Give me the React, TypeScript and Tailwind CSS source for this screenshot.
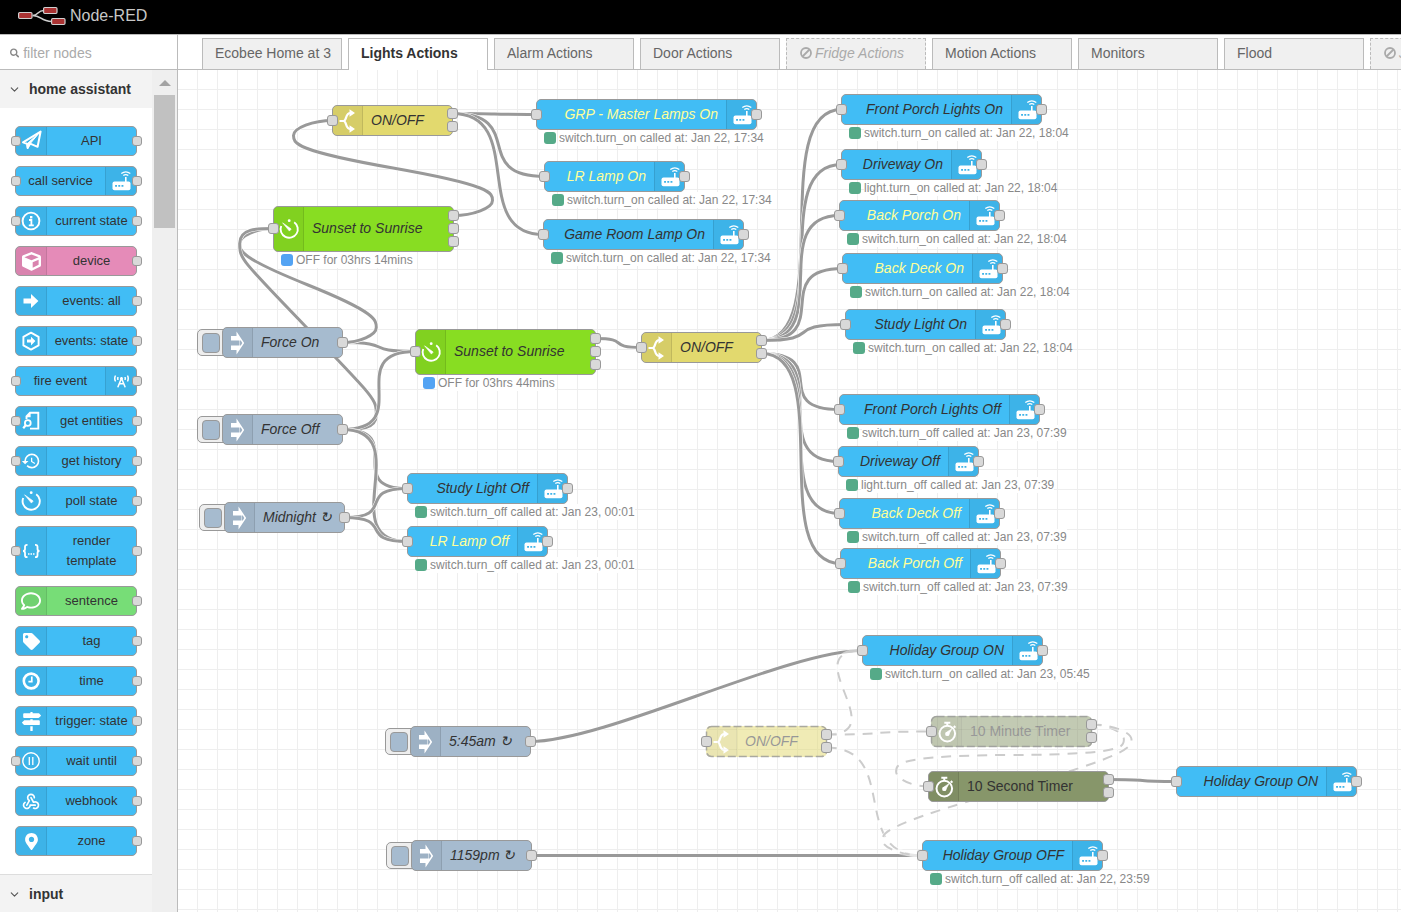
import React from "react";
import {
  FaBroadcastTower,
  FaCube,
  FaMapMarkerAlt,
  FaMapSigns,
  FaRegComment,
  FaSearch,
  FaTag,
} from "react-icons/fa";
import { MdHistory } from "react-icons/md";
import { TbWebhook } from "react-icons/tb";
import { ChevronDown } from "lucide-react";

/* ---------- icons ---------- */

function Glyph({ children }: { children: React.ReactNode }) {
  return (
    <svg viewBox="1 1 28 28" className="size-7 shrink-0" fill="none" stroke="#fff" strokeWidth="2" aria-hidden="true">
      {children}
    </svg>
  );
}

const RouterIcon = () => (
  <Glyph>
    <rect x="6.5" y="15.6" width="18" height="8.6" rx="2" fill="#fff" stroke="none" />
    <path d="M19.8 16v-5" strokeWidth="1.6" />
    <path d="M17.3 9.6q2.5-1.9 5 0M15.300 7.500q4.500-3.300 9 0" strokeWidth="1.3" />
    <path d="M9.1 19.900h1.900M12.300 19.900h1.900M15.500 19.900h1.900" stroke="#3eb3e8" strokeWidth="1.900" />
  </Glyph>
);

const PlaneIcon = () => (
  <Glyph>
    <path d="M7 16.4 24.6 5.6 21.6 20.8 14.2 17.6 11.6 21.8 11 17.8Z" strokeWidth="2" strokeLinejoin="round" />
    <path d="M11 18 24 6 14 17.8 11.6 23Z" fill="#fff" strokeWidth="1" strokeLinejoin="round" />
  </Glyph>
);

const InfoIcon = () => (
  <Glyph>
    <circle cx="15" cy="15" r="8.4" strokeWidth="1.9" />
    <path d="M15.2 10v2.4" strokeWidth="2.4" />
    <path d="M13 14h2.4v5.2M12.8 19.4h5" strokeWidth="1.8" />
  </Glyph>
);

const ArrowIcon = () => (
  <Glyph>
    <path d="M7.5 12.4H15V8L22.4 15 15 22v-4.4H7.5Z" fill="#fff" stroke="none" />
  </Glyph>
);

const HexArrowIcon = () => (
  <Glyph>
    <path d="M15 6.6 22.6 10.8v8.600L15 23.600 7.400 19.400V10.800Z" strokeWidth="1.900" strokeLinejoin="round" />
    <path d="M11 13.600h4V10.700l4.400 4.400-4.400 4.400v-2.900h-4Z" fill="#fff" stroke="none" />
  </Glyph>
);

const EntitiesIcon = () => (
  <Glyph>
    <path d="M10.500 13V10.400L14 6.800h8.300V22.600H14" strokeWidth="1.900" />
    <path d="M10 11.200 14.600 6.400V11.200Z" fill="#fff" stroke="none" />
    <circle cx="11.800" cy="17" r="2.900" strokeWidth="1.800" />
    <path d="M9.700 19.200 7.200 22.200" strokeWidth="2.200" />
  </Glyph>
);

const TimerIcon = () => (
  <Glyph>
    <path d="M20.200 8.200A8.600 8.600 0 1 1 7.200 12" strokeWidth="1.900" />
    <circle cx="15.200" cy="6.700" r="1.400" fill="#fff" stroke="none" />
    <path d="M8.600 8.800 17.200 15 15.400 17.100Z" fill="#fff" strokeWidth=".6" strokeLinejoin="round" />
  </Glyph>
);

const ClockIcon = () => (
  <Glyph>
    <circle cx="15.200" cy="15" r="7.400" strokeWidth="2.600" />
    <path d="M15.800 10.600v5H12.400" strokeWidth="1.700" />
  </Glyph>
);

const BracesIcon = () => (
  <Glyph>
    <path
      d="M11.500 8.800H11q-2 0-2 2v2.200q0 2-2 2 2 0 2 2v2.200q0 2 2 2h.5M19 8.800h.5q2 0 2 2v2.200q0 2 2 2-2 0-2 2v2.200q0 2-2 2H19"
      strokeWidth="1.800"
    />
    <path d="M12 18h1.500M14.500 18h1.500M17 18h1.500" strokeWidth="1.400" />
  </Glyph>
);

const PauseIcon = () => (
  <Glyph>
    <circle cx="15" cy="15" r="8.200" strokeWidth="1.400" />
    <path d="M13.300 11v8M16.800 11v8" strokeWidth="1.300" />
  </Glyph>
);

const SwitchIcon = () => (
  <Glyph>
    <path d="M6.500 15h4C14 15 12 7 17.500 7M10.500 15C14 15 12 23 17.500 23" strokeWidth="2.200" />
    <path d="M16.500 3.200 22 7 16.500 10.800ZM16.500 19.200 22 23 16.500 26.800Z" fill="#fff" stroke="none" />
  </Glyph>
);

const InjectIcon = () => (
  <Glyph>
    <path
      fillRule="evenodd"
      d="M13.500 3.500 21.200 15 13.500 26.500V22H8v-4.500h9V12.500H8V8h5.500ZM16.500 12.500v5h1.300L19.300 15 17.800 12.500Z"
      fill="#fff"
      stroke="none"
    />
  </Glyph>
);

const StopwatchIcon = () => (
  <Glyph>
    <circle cx="15.300" cy="16.600" r="7.800" strokeWidth="2" />
    <path d="M12.300 5.800h6M15.300 6v3M21.800 9 23.400 10.600" strokeWidth="2" />
    <path d="M14.200 15.600 20.200 11.400 16.600 17.800Z" fill="#fff" strokeWidth=".6" />
    <circle cx="15.300" cy="16.900" r="2.200" fill="#fff" stroke="none" />
  </Glyph>
);

const BanIcon = () => (
  <svg viewBox="0 0 14 14" className="size-[14px] shrink-0" fill="none" stroke="currentColor" strokeWidth="1.800" aria-hidden="true">
    <circle cx="7" cy="7" r="5" />
    <path d="M3.500 10.500 10.500 3.500" />
  </svg>
);

/* ---------- palette ---------- */

type PaletteItem = {
  label: string;
  icon: React.ReactNode;
  input?: boolean;
  iconRight?: boolean;
  color?: string;
};

const paletteItems: PaletteItem[] = [
  { label: "API", icon: <PlaneIcon />, input: true },
  { label: "call service", icon: <RouterIcon />, input: true, iconRight: true },
  { label: "current state", icon: <InfoIcon />, input: true },
  { label: "device", icon: <FaCube size={19} />, color: "bg-[#e58bb8]" },
  { label: "events: all", icon: <ArrowIcon /> },
  { label: "events: state", icon: <HexArrowIcon /> },
  { label: "fire event", icon: <FaBroadcastTower size={15} />, input: true, iconRight: true },
  { label: "get entities", icon: <EntitiesIcon />, input: true },
  { label: "get history", icon: <MdHistory size={20} />, input: true },
  { label: "poll state", icon: <TimerIcon /> },
  { label: "render template", icon: <BracesIcon />, input: true },
  { label: "sentence", icon: <FaRegComment size={20} />, color: "bg-[#77dd77]" },
  { label: "tag", icon: <FaTag size={17} /> },
  { label: "time", icon: <ClockIcon /> },
  { label: "trigger: state", icon: <FaMapSigns size={19} /> },
  { label: "wait until", icon: <PauseIcon />, input: true },
  { label: "webhook", icon: <TbWebhook size={20} /> },
  { label: "zone", icon: <FaMapMarkerAlt size={17} /> },
];

const portLook = "absolute box-border rounded-[3px] border border-[#999] bg-[#d9d9d9]";

function PaletteNode({ item }: { item: PaletteItem }) {
  return (
    <li
      className={`relative flex min-h-[30px] rounded-[5px] border border-[#999] ${item.color ?? "bg-[#41bdf5]"} ${item.iconRight ? "flex-row-reverse" : ""}`}
    >
      <span
        className={`flex w-[31px] shrink-0 items-center justify-center bg-black/5 text-white ${item.iconRight ? "rounded-r-[4px] border-l border-black/10" : "rounded-l-[4px] border-r border-black/10"}`}
      >
        {item.icon}
      </span>
      <span className={`flex-1 py-1 text-center text-[13px] leading-5 text-[#333] ${item.iconRight ? "" : "px-[6px]"}`}>
        {item.label}
      </span>
      {item.input && <i className={`${portLook} top-1/2 -left-[5px] size-[10px] -translate-y-1/2`} />}
      <i className={`${portLook} top-1/2 -right-[6px] size-[10px] -translate-y-1/2`} />
    </li>
  );
}

function CategoryHeader({ name }: { name: string }) {
  return (
    <button type="button" className="flex h-[38px] w-full items-center gap-2 bg-[#f3f3f3] pl-2 text-left text-sm font-bold text-[#333]">
      <ChevronDown size={13} strokeWidth={2} className="text-[#555]" />
      {name}
    </button>
  );
}

function Palette() {
  return (
    <aside className="flex w-[178px] shrink-0 flex-col border-r border-[#bbb] bg-white">
      <label className="flex h-[35px] shrink-0 items-center gap-1 border-b border-[#bbb] pt-0.5 pl-[10px]">
        <FaSearch size={10} className="text-[#888]" />
        <input
          type="text"
          aria-label="filter nodes"
          placeholder="filter nodes"
          className="w-full min-w-0 text-sm outline-none placeholder:text-[#aaa]"
        />
      </label>
      <div className="flex min-h-0 flex-1">
        <div className="min-w-0 flex-1 overflow-hidden">
          <CategoryHeader name="home assistant" />
          <ul className="flex flex-col gap-[10px] py-[18px] pr-[15px] pl-[15px]">
            {paletteItems.map((item) => (
              <PaletteNode key={item.label} item={item} />
            ))}
          </ul>
          <div className="border-t border-[#ddd]">
            <CategoryHeader name="input" />
          </div>
        </div>
        <div className="flex w-[25px] flex-col items-center gap-[9px] bg-[#efefef] pt-[10px]">
          <i className="size-0 border-x-[6px] border-b-[6px] border-x-transparent border-b-[#a3a3a3]" />
          <i className="h-[133px] w-[21px] bg-[#c1c1c1]" />
        </div>
      </div>
    </aside>
  );
}

/* ---------- flow ---------- */

type Kind = "service" | "switch" | "timer" | "inject" | "stopwatch";

type FlowNode = {
  id: string;
  kind: Kind;
  x: number;
  y: number;
  w: number;
  label: string;
  status?: string;
  tone?: "yellow";
  disabled?: boolean;
};

const nodes: FlowNode[] = [
  { id: "sw1", kind: "switch", x: 154, y: 35, w: 120, label: "ON/OFF" },
  { id: "sun1", kind: "timer", x: 95, y: 136, w: 180, label: "Sunset to Sunrise", status: "OFF for 03hrs 14mins" },
  { id: "fon", kind: "inject", x: 44, y: 257, w: 120, label: "Force On" },
  { id: "foff", kind: "inject", x: 44, y: 344, w: 120, label: "Force Off" },
  { id: "mid", kind: "inject", x: 46, y: 432, w: 120, label: "Midnight ↻" },
  { id: "sun2", kind: "timer", x: 237, y: 259, w: 180, label: "Sunset to Sunrise", status: "OFF for 03hrs 44mins" },
  { id: "sw2", kind: "switch", x: 463, y: 262, w: 120, label: "ON/OFF" },
  { id: "grp", kind: "service", x: 358, y: 29, w: 220, label: "GRP - Master Lamps On", tone: "yellow", status: "switch.turn_on called at: Jan 22, 17:34" },
  { id: "lron", kind: "service", x: 366, y: 91, w: 140, label: "LR Lamp On", tone: "yellow", status: "switch.turn_on called at: Jan 22, 17:34" },
  { id: "game", kind: "service", x: 365, y: 149, w: 200, label: "Game Room Lamp On", status: "switch.turn_on called at: Jan 22, 17:34" },
  { id: "fpon", kind: "service", x: 663, y: 24, w: 200, label: "Front Porch Lights On", status: "switch.turn_on called at: Jan 22, 18:04" },
  { id: "dwon", kind: "service", x: 663, y: 79, w: 140, label: "Driveway On", status: "light.turn_on called at: Jan 22, 18:04" },
  { id: "bpon", kind: "service", x: 661, y: 130, w: 160, label: "Back Porch On", tone: "yellow", status: "switch.turn_on called at: Jan 22, 18:04" },
  { id: "bdon", kind: "service", x: 664, y: 183, w: 160, label: "Back Deck On", tone: "yellow", status: "switch.turn_on called at: Jan 22, 18:04" },
  { id: "slon", kind: "service", x: 667, y: 239, w: 160, label: "Study Light On", status: "switch.turn_on called at: Jan 22, 18:04" },
  { id: "fpoff", kind: "service", x: 661, y: 324, w: 200, label: "Front Porch Lights Off", status: "switch.turn_off called at: Jan 23, 07:39" },
  { id: "dwoff", kind: "service", x: 660, y: 376, w: 140, label: "Driveway Off", status: "light.turn_off called at: Jan 23, 07:39" },
  { id: "bdoff", kind: "service", x: 661, y: 428, w: 160, label: "Back Deck Off", tone: "yellow", status: "switch.turn_off called at: Jan 23, 07:39" },
  { id: "bpoff", kind: "service", x: 662, y: 478, w: 160, label: "Back Porch Off", tone: "yellow", status: "switch.turn_off called at: Jan 23, 07:39" },
  { id: "sloff", kind: "service", x: 229, y: 403, w: 160, label: "Study Light Off", status: "switch.turn_off called at: Jan 23, 00:01" },
  { id: "lroff", kind: "service", x: 229, y: 456, w: 140, label: "LR Lamp Off", tone: "yellow", status: "switch.turn_off called at: Jan 23, 00:01" },
  { id: "hon", kind: "service", x: 684, y: 565, w: 180, label: "Holiday Group ON", status: "switch.turn_on called at: Jan 23, 05:45" },
  { id: "am", kind: "inject", x: 232, y: 656, w: 120, label: "5:45am ↻" },
  { id: "pm", kind: "inject", x: 233, y: 770, w: 120, label: "1159pm ↻" },
  { id: "sw3", kind: "switch", x: 528, y: 656, w: 120, label: "ON/OFF", disabled: true },
  { id: "t10m", kind: "stopwatch", x: 753, y: 646, w: 160, label: "10 Minute Timer", disabled: true },
  { id: "t10s", kind: "stopwatch", x: 750, y: 701, w: 180, label: "10 Second Timer" },
  { id: "hon2", kind: "service", x: 998, y: 696, w: 180, label: "Holiday Group ON" },
  { id: "hoff", kind: "service", x: 744, y: 770, w: 180, label: "Holiday Group OFF", status: "switch.turn_off called at: Jan 22, 23:59" },
];

const kinds: Record<Kind, { fill: string; icon: React.ReactNode; outputs: number; height: number }> = {
  service: { fill: "bg-[#41bdf5]", icon: <RouterIcon />, outputs: 1, height: 30 },
  switch: { fill: "bg-[#e2d96e]", icon: <SwitchIcon />, outputs: 2, height: 30 },
  timer: { fill: "bg-[#88dd22]", icon: <TimerIcon />, outputs: 3, height: 45 },
  inject: { fill: "bg-[#a6bbcf]", icon: <InjectIcon />, outputs: 1, height: 30 },
  stopwatch: { fill: "bg-[#87966a]", icon: <StopwatchIcon />, outputs: 2, height: 30 },
};

type Link = [from: string, port: number, to: string, disabled?: boolean];

const links: Link[] = [
  ["sw1", 0, "grp"],
  ["sw1", 0, "lron"],
  ["sw1", 0, "game"],
  ["sun1", 0, "sw1"],
  ["fon", 0, "sun2"],
  ["fon", 0, "sun1"],
  ["foff", 0, "sun1"],
  ["foff", 0, "sun2"],
  ["foff", 0, "sloff"],
  ["foff", 0, "lroff"],
  ["mid", 0, "sloff"],
  ["mid", 0, "lroff"],
  ["sun2", 0, "sw2"],
  ["sw2", 0, "fpon"],
  ["sw2", 0, "dwon"],
  ["sw2", 0, "bpon"],
  ["sw2", 0, "bdon"],
  ["sw2", 0, "slon"],
  ["sw2", 1, "fpoff"],
  ["sw2", 1, "dwoff"],
  ["sw2", 1, "bdoff"],
  ["sw2", 1, "bpoff"],
  ["am", 0, "hon"],
  ["pm", 0, "hoff"],
  ["t10s", 0, "hon2"],
  ["sw3", 0, "hon", true],
  ["sw3", 0, "t10m", true],
  ["sw3", 1, "hoff", true],
  ["t10m", 0, "t10s", true],
  ["t10m", 0, "hoff", true],
];

function outputTop(kind: Kind, port: number) {
  const { outputs, height } = kinds[kind];
  return Math.floor((height + 1 - (outputs * 13 - 2)) / 2) + port * 13;
}

const REACH = 100;

function linkPath(ox: number, oy: number, tx: number, ty: number) {
  const dx = tx - ox;
  const dy = ty - oy;
  const delta = Math.hypot(dx, dy);
  if (dx > 0) {
    const scale = delta < REACH ? 0.75 * (delta / REACH) : 0.75;
    return `M${ox} ${oy}C${ox + REACH * scale} ${oy} ${tx - REACH * scale} ${ty} ${tx} ${ty}`;
  }
  const scale = 0.4 - 0.2 * Math.max(0, (REACH - Math.min(Math.abs(dx), Math.abs(dy))) / REACH);
  const midX = Math.floor(tx - dx / 2);
  const midY = dy === 0 ? ty + 30 : Math.floor(ty - dy / 2);
  const ch = 15;
  const s = dy > 0 ? 1 : -1;
  const near = dy > 0 ? Math.min : Math.max;
  const far = dy > 0 ? Math.max : Math.min;
  const y1 = (ty + midY) / 2;
  const topX = ox + REACH * scale;
  const topY = near(y1 - dy / 2, oy + s * ch);
  const botX = tx - REACH * scale;
  const botY = far(y1, ty - s * ch);
  const x1 = (ox + topX) / 2;
  const cp = [
    [x1, oy],
    [topX, far(oy, topY - s * ch)],
    [x1, near(midY, topY + s * ch)],
    [botX, far(midY, botY - s * ch)],
    [(tx + botX) / 2, ty],
  ];
  if (cp[2][1] === topY + s * ch) {
    if (Math.abs(dy) < ch * 10) {
      cp[1][1] = topY - (s * ch) / 2;
      cp[3][1] = botY - (s * ch) / 2;
    }
    cp[2][0] = topX;
  }
  return `M${ox} ${oy}C${cp[0]} ${cp[1]} ${topX} ${topY}S${cp[2]} ${midX} ${midY}S${cp[3]} ${botX} ${botY}S${cp[4]} ${tx} ${ty}`;
}

function Wires() {
  const byId = new Map(nodes.map((n) => [n.id, n]));
  return (
    <svg className="absolute inset-0 h-full w-full" fill="none" aria-hidden="true">
      {links.map(([from, port, to, disabled]) => {
        const a = byId.get(from)!;
        const b = byId.get(to)!;
        const d = linkPath(
          a.x + a.w + 0.5,
          a.y + outputTop(a.kind, port) + 5.5,
          b.x + 0.5,
          b.y + Math.floor(kinds[b.kind].height / 2) + 0.5
        );
        return (
          <g key={`${from}-${port}-${to}`}>
            <path d={d} stroke="#fff" strokeWidth="4" strokeOpacity={disabled ? 0.5 : 1} />
            {disabled ? (
              <path d={d} stroke="#ccc" strokeWidth="2" strokeDasharray="10 8" />
            ) : (
              <path d={d} stroke="#999" strokeWidth="3" />
            )}
          </g>
        );
      })}
    </svg>
  );
}

function CanvasNode({ node }: { node: FlowNode }) {
  const { fill, icon, outputs, height } = kinds[node.kind];
  const right = node.kind === "service";
  const italic = node.kind !== "stopwatch";
  return (
    <div className="absolute" style={{ left: node.x, top: node.y, width: node.w + 1 }}>
      {node.kind === "inject" && (
        <button
          type="button"
          aria-label={`Inject ${node.label}`}
          className="absolute top-[2px] -left-[25px] flex h-[27px] w-8 items-center rounded-[5px] border border-[#999] bg-[#eee] pl-1"
        >
          <i className="h-5 w-[18px] rounded-[4px] border border-[#999] bg-[#a6bbcf]" />
        </button>
      )}
      <div
        className={`relative flex overflow-hidden rounded-[5px] border ${fill} ${right ? "flex-row-reverse" : ""} ${node.disabled ? "border-transparent opacity-50" : "border-[#999]"}`}
        style={{ height: height + 1 }}
      >
        <span
          className={`flex w-[30px] shrink-0 items-center justify-center bg-black/5 ${right ? "border-l border-black/10" : "border-r border-black/10"}`}
        >
          {icon}
        </span>
        <span
          className={`flex flex-1 items-center px-2 pb-0.5 text-sm whitespace-nowrap ${italic ? "italic" : ""} ${right ? "justify-end" : ""} ${node.tone ? "text-[#ffff99]" : "text-[#333]"}`}
        >
          {node.label}
        </span>
      </div>
      {node.disabled && (
        <svg className="absolute inset-0 h-full w-full overflow-visible" fill="none" aria-hidden="true">
          <rect x=".5" y=".5" width={node.w} height={height} rx="5" stroke="#999" strokeWidth="1.500" strokeOpacity=".8" strokeDasharray="8 3" />
        </svg>
      )}
      {node.kind !== "inject" && (
        <i className={`${portLook} -left-[5px] size-[11px]`} style={{ top: Math.floor((height - 10) / 2) }} />
      )}
      {Array.from({ length: outputs }, (_, i) => (
        <i key={i} className={`${portLook} -right-[5px] size-[11px]`} style={{ top: outputTop(node.kind, i) }} />
      ))}
      {node.status && (
        <div className="absolute top-full left-2 flex items-center gap-[3px] text-xs leading-4 whitespace-nowrap text-[#888]">
          <i className={`size-3 rounded-[3px] ${node.kind === "timer" ? "bg-[#53a3f3]" : "bg-[#55aa88]"}`} />
          <span className="bg-white">{node.status}</span>
        </div>
      )}
    </div>
  );
}

const tabs = [
  { name: "Ecobee Home at 3" },
  { name: "Lights Actions", active: true },
  { name: "Alarm Actions" },
  { name: "Door Actions" },
  { name: "Fridge Actions", disabled: true },
  { name: "Motion Actions" },
  { name: "Monitors" },
  { name: "Flood" },
  { name: "Jobs", disabled: true },
];

function Tabs() {
  return (
    <div role="tablist" className="flex h-[35px] shrink-0 items-end gap-[6px] border-b border-[#bbb] pl-6">
      {tabs.map((tab) => (
        <button
          key={tab.name}
          type="button"
          role="tab"
          aria-selected={!!tab.active}
          className={`flex w-[140px] shrink-0 items-center gap-0.5 overflow-hidden border border-b-0 border-[#bbb] pl-3 text-sm whitespace-nowrap ${
            tab.active
              ? "-mb-px h-8 bg-white pb-[3px] font-bold text-[#333]"
              : tab.disabled
                ? "h-[31px] border-dashed bg-[#f0f0f0] pb-0.5 text-[#aaa] italic"
                : "h-[31px] bg-[#f0f0f0] pb-0.5 text-[#666]"
          }`}
        >
          {tab.disabled && <BanIcon />}
          {tab.name}
        </button>
      ))}
    </div>
  );
}

function Logo() {
  return (
    <svg viewBox="0 0 48 20" className="h-5 w-12" fill="#aa3333" stroke="#d0d0d0" strokeWidth="1.200" aria-hidden="true">
      <path d="M14.500 9.500C21 9.500 19 4.500 26 4.500M14.500 9.500C24 9.500 22 15.500 34 15.500" fill="none" strokeWidth="1.500" />
      <rect x=".6" y="6.500" width="13.400" height="6" rx="1.200" />
      <rect x="25.600" y="1.500" width="13.400" height="6" rx="1.200" />
      <rect x="33.600" y="12.500" width="13.400" height="6" rx="1.200" />
    </svg>
  );
}

export default function App() {
  return (
    <div className="flex h-screen flex-col overflow-hidden bg-white font-['Liberation_Sans',Arial,sans-serif]">
      <header className="flex h-[35px] shrink-0 items-center gap-1 border-b border-[#bbb] bg-black pb-[3px] pl-[18px]">
        <Logo />
        <h1 className="text-base text-[#c7c7c7]">Node-RED</h1>
      </header>
      <div className="flex min-h-0 flex-1">
        <Palette />
        <main className="flex min-w-0 flex-1 flex-col">
          <Tabs />
          <div className="relative flex-1 overflow-hidden bg-[linear-gradient(to_right,transparent_19px,#eee_19px),linear-gradient(to_bottom,transparent_19px,#eee_19px)] bg-size-[20px_20px]">
            <Wires />
            {nodes.map((n) => (
              <CanvasNode key={n.id} node={n} />
            ))}
          </div>
        </main>
      </div>
    </div>
  );
}
